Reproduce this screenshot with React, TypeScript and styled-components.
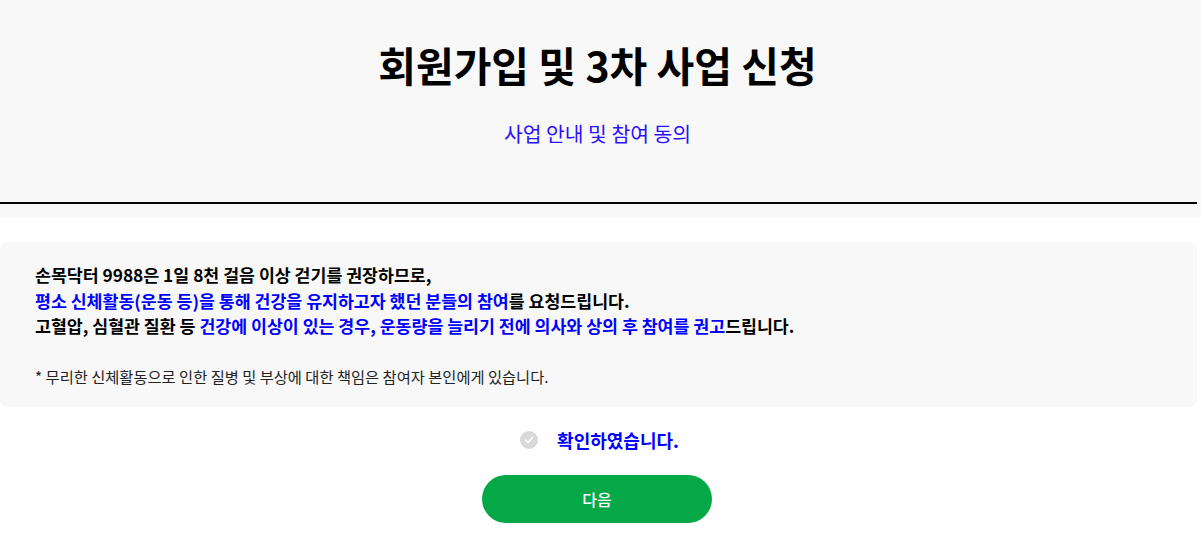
import styled, { createGlobalStyle } from "styled-components";

const GlobalStyle = createGlobalStyle`
  html, body {
    margin: 0;
    padding: 0;
    background: #ffffff;
  }
  body {
    font-family: "Noto Sans CJK KR", "Noto Sans", sans-serif;
    color: #000;
  }
`;

const Page = styled.div`
  width: 1197px;
  display: flex;
  flex-direction: column;
`;

const Header = styled.header`
  width: 1201px;
  background: #f8f8f8;
  padding: 38px 0 13px;
  box-sizing: border-box;
  display: flex;
  flex-direction: column;
`;

const Title = styled.h1`
  width: 1195px;
  margin: 0;
  text-align: center;
  font-size: 41px;
  font-weight: 700;
  line-height: 52px;
`;

const Subtitle = styled.p`
  width: 1195px;
  margin: 29px 0 0;
  text-align: center;
  font-size: 20.4px;
  line-height: 28px;
  color: #2a10ff;
`;

const Divider = styled.div`
  width: 1197px;
  height: 2px;
  margin-top: 55px;
  background: #000;
`;

const Notice = styled.section`
  margin-top: 25px;
  background: #f8f8f8;
  border-radius: 8px;
  padding: 20px 35px 20px;
`;

const Lead = styled.p`
  margin: 0;
  font-size: 17.3px;
  font-weight: 700;
  line-height: 25.5px;
`;

const Accent = styled.span`
  color: #0000ff;
`;

const Caution = styled.p`
  margin: 26px 0 0;
  font-size: 15.3px;
  line-height: 22px;
  color: #222;
`;

const Confirm = styled.label`
  width: 1199px;
  display: flex;
  align-items: center;
  justify-content: center;
  gap: 19px;
  margin-top: 20px;
  height: 26px;
  cursor: pointer;
`;

const Check = styled.span`
  width: 18px;
  height: 18px;
  border-radius: 50%;
  background: #d9d9d9;
  display: flex;
  align-items: center;
  justify-content: center;
`;

const ConfirmText = styled.span`
  font-size: 18px;
  font-weight: 700;
  line-height: 26px;
  color: #0000ff;
`;

const Actions = styled.div`
  width: 1194px;
  display: flex;
  justify-content: center;
  margin-top: 22px;
`;

const NextButton = styled.button`
  width: 230px;
  height: 48px;
  border: 0;
  border-radius: 24px;
  background: #05a847;
  color: #fff;
  font-family: inherit;
  font-size: 16px;
  font-weight: 500;
  cursor: pointer;
`;

export default function App() {
  return (
    <>
      <GlobalStyle />
      <Page>
        <Header>
          <Title>회원가입 및 3차 사업 신청</Title>
          <Subtitle>사업 안내 및 참여 동의</Subtitle>
          <Divider />
        </Header>
        <Notice>
          <Lead>손목닥터 9988은 1일 8천 걸음 이상 걷기를 권장하므로,</Lead>
          <Lead>
            <Accent>평소 신체활동(운동 등)을 통해 건강을 유지하고자 했던 분들의 참여</Accent>를 요청드립니다.
          </Lead>
          <Lead>
            고혈압, 심혈관 질환 등 <Accent>건강에 이상이 있는 경우, 운동량을 늘리기 전에 의사와 상의 후 참여를 권고</Accent>드립니다.
          </Lead>
          <Caution>* 무리한 신체활동으로 인한 질병 및 부상에 대한 책임은 참여자 본인에게 있습니다.</Caution>
        </Notice>
        <Confirm>
          <Check>
            <svg width="10" height="8" viewBox="0 0 10 8" fill="none">
              <path d="M1.5 4.2 L4 6.5 L8.5 1.5" stroke="#fff" strokeWidth="1.6" strokeLinecap="round" strokeLinejoin="round" />
            </svg>
          </Check>
          <ConfirmText>확인하였습니다.</ConfirmText>
        </Confirm>
        <Actions>
          <NextButton>다음</NextButton>
        </Actions>
      </Page>
    </>
  );
}
